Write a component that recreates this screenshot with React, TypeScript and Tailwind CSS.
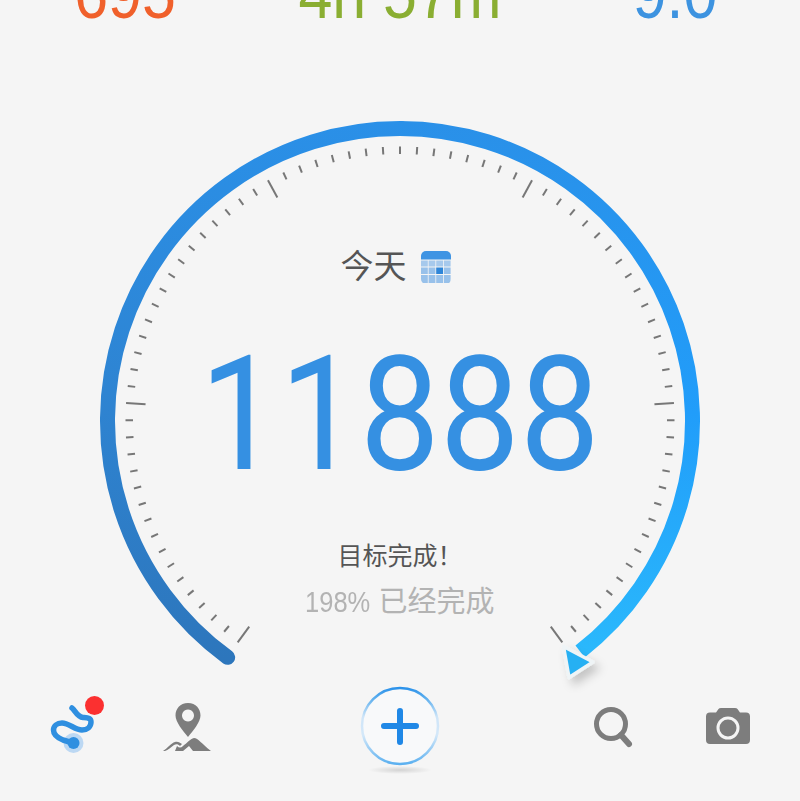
const CX = 400;
const CY = 421;
const R = 292.5;

const polar = (deg: number, r: number) => {
  const a = (deg * Math.PI) / 180;
  return { x: CX + r * Math.sin(a), y: CY - r * Math.cos(a) };
};

const ticks = Array.from({ length: 81 }, (_, i) => -143.75 + i * 3.59375);

function Gauge() {
  const start = polar(-143.9, R);
  const end = polar(142, R);
  return (
    <svg width="800" height="700" viewBox="0 0 800 700" className="absolute left-0 top-0">
      <defs>
        <linearGradient id="arcLeft" gradientUnits="userSpaceOnUse" x1="0" y1="660" x2="0" y2="121">
          <stop offset="0" stopColor="#2d76bc" />
          <stop offset="0.5" stopColor="#2e84d2" />
          <stop offset="1" stopColor="#2a90e8" />
        </linearGradient>
        <linearGradient id="arcRight" gradientUnits="userSpaceOnUse" x1="0" y1="121" x2="0" y2="650">
          <stop offset="0" stopColor="#2a90e8" />
          <stop offset="0.55" stopColor="#219dfa" />
          <stop offset="1" stopColor="#2ab8fc" />
        </linearGradient>
        <filter id="pointerShadow" x="-50%" y="-50%" width="200%" height="200%">
          <feDropShadow dx="5" dy="6" stdDeviation="5" floodColor="#000" floodOpacity="0.2" />
        </filter>
      </defs>
      {ticks.map((deg, i) => {
        const major = i % 16 === 0;
        const a = polar(deg, 274.5);
        const b = polar(deg, major ? 255 : 267);
        return <line key={i} x1={a.x} y1={a.y} x2={b.x} y2={b.y} stroke="#777" strokeWidth="2" />;
      })}
      <path
        d={`M ${start.x} ${start.y} A ${R} ${R} 0 0 1 ${CX + 1} ${CY - R}`}
        fill="none"
        stroke="url(#arcLeft)"
        strokeWidth="15"
        strokeLinecap="round"
      />
      <path
        d={`M ${CX} ${CY - R} A ${R} ${R} 0 0 1 ${end.x} ${end.y}`}
        fill="none"
        stroke="url(#arcRight)"
        strokeWidth="15"
      />
      <path
        d="M563.5 646.5 L593 662 L569 677.5 Z"
        fill="#28b0f3"
        stroke="#eff4f6"
        strokeWidth="3.5"
        strokeLinejoin="round"
        filter="url(#pointerShadow)"
      />
    </svg>
  );
}

function CalendarIcon() {
  const cells = Array.from({ length: 12 }, (_, i) => i);
  const rows = [9.5, 16.5, 24];
  const heights = [6, 6.5, 8];
  return (
    <svg width="30" height="33" viewBox="0 0 30 33">
      <defs>
        <clipPath id="calClip">
          <rect x="0" y="0" width="30" height="33" rx="5" />
        </clipPath>
      </defs>
      <g clipPath="url(#calClip)">
        <rect x="0" y="0" width="30" height="8.5" fill="#3f94e3" />
        {cells.map((i) => {
          const row = Math.floor(i / 4);
          return (
            <rect
              key={i}
              x={(i % 4) * 7.6}
              y={rows[row]}
              width="6.8"
              height={heights[row]}
              fill={i === 6 ? "#2f86d8" : row === 0 ? "#a6c9ec" : "#98c1ea"}
            />
          );
        })}
      </g>
    </svg>
  );
}

function RouteIcon() {
  return (
    <div className="relative w-[56px] h-[62px]">
      <svg width="56" height="62" viewBox="0 0 56 62">
        <circle cx="28.5" cy="49" r="10" fill="#bcd8f3" />
        <path
          d="M27 14 C30 16 32 23 38 23.5 C43 24 46 24 46 28 C46 33 42 36 37 36 C30 36 24 29 17 29 C12 29 8.5 32 8.5 36 C8.5 41 13 44 18 46 L28 49"
          fill="none"
          stroke="#2f8fe0"
          strokeWidth="5.5"
          strokeLinecap="round"
          strokeLinejoin="round"
        />
        <circle cx="28.5" cy="49" r="6" fill="#2f8fe0" />
      </svg>
      <span className="absolute left-[40px] top-[2px] w-[19px] h-[19px] rounded-full bg-[#fb3030]" />
    </div>
  );
}

function PinIcon() {
  return (
    <svg width="50" height="50" viewBox="0 0 50 50">
      <path
        d="M26 1 C34 1 38.5 7 38.5 13.5 C38.5 20 31 29 26 35 C21 29 13.5 20 13.5 13.5 C13.5 7 18 1 26 1 Z M26 7.5 a6 6 0 1 0 0.01 0 Z"
        fill="#7d7d7d"
        fillRule="evenodd"
      />
      <path
        d="M1 49 C6 46 9 41 13 40 C16 39 18 41 20 42 L18 44 C16 42 14 42 12 43 C9 45 6 48 3 49 Z M13 49 L15 44 C17 46 19 46 21 44 C25 41 28 37 32 36 C36 36 40 42 49 49 L31 49 L27 44 L21 49 Z"
        fill="#7d7d7d"
      />
    </svg>
  );
}

function SearchIcon() {
  return (
    <svg width="44" height="44" viewBox="0 0 44 44">
      <circle cx="18" cy="18" r="14.5" fill="none" stroke="#7d7d7d" strokeWidth="5" />
      <path d="M28 29 L36 38" stroke="#7d7d7d" strokeWidth="6" strokeLinecap="round" />
    </svg>
  );
}

function CameraIcon() {
  return (
    <svg width="44" height="36" viewBox="0 0 44 36">
      <path
        d="M4 4.5 H10 L12.5 1 Q13.2 0 15 0 H29 Q30.8 0 31.5 1 L34 4.5 H40 Q44 4.5 44 8.5 V32 Q44 36 40 36 H4 Q0 36 0 32 V8.5 Q0 4.5 4 4.5 Z"
        fill="#7d7d7d"
      />
      <circle cx="22" cy="20" r="10" fill="none" stroke="#f5f5f5" strokeWidth="3" />
    </svg>
  );
}

function AddButton() {
  return (
    <div className="relative w-[80px] h-[100px]">
      <svg width="80" height="100" viewBox="0 0 80 100">
        <defs>
          <linearGradient id="ring" x1="0" y1="0" x2="0" y2="1">
            <stop offset="0" stopColor="#2c92ea" />
            <stop offset="0.14" stopColor="#5fb0ee" />
            <stop offset="0.38" stopColor="#cfe5f8" />
            <stop offset="0.62" stopColor="#d4e8f9" />
            <stop offset="1" stopColor="#5bb0f0" />
          </linearGradient>
          <radialGradient id="floor">
            <stop offset="0" stopColor="#000" stopOpacity="0.14" />
            <stop offset="1" stopColor="#000" stopOpacity="0" />
          </radialGradient>
          <filter id="soft" x="-20%" y="-20%" width="140%" height="140%">
            <feGaussianBlur stdDeviation="0.7" />
          </filter>
        </defs>
        <ellipse cx="40" cy="84" rx="32" ry="4" fill="url(#floor)" />
        <circle cx="40" cy="40" r="38" fill="#f8f9fa" stroke="url(#ring)" strokeWidth="2.5" filter="url(#soft)" />
        <path d="M24 40 H56 M40 25 V56" stroke="#2088e6" strokeWidth="6" strokeLinecap="round" />
      </svg>
    </div>
  );
}

export default function App() {
  return (
    <div className="relative w-[800px] h-[801px] overflow-hidden bg-[#f5f5f5] font-['Liberation_Sans','Noto_Sans_CJK_SC',sans-serif]">
      <Gauge />

      <div className="flex h-[29px] items-end text-[70px] leading-none">
        <div className="w-[250px] text-center text-[#f0602b] scale-x-[0.87]">695</div>
        <div className="w-[300px] text-center text-[#8aae32] scale-x-[0.87]">4h 57m</div>
        <div className="w-[250px] text-center text-[#3d93e0] scale-x-[0.87]">9.0</div>
      </div>

      <div className="relative flex flex-col items-center pt-[216px]">
        <div className="flex items-center gap-[14px] pr-[9px] text-[33px] leading-[44px] text-[#555555]">
          <span>今天</span>
          <CalendarIcon />
        </div>
        <div className="mt-[42px] font-['Roboto'] text-[160px] leading-[168px] text-[#3590e2] scale-x-[0.89]">
          11888
        </div>
        <div className="mt-[40px] text-[25px] leading-[34px] text-[#555555]">目标完成！</div>
        <div className="mt-[11px] flex text-[29px] leading-[36px] text-[#b3b3b3]">
          <span className="origin-left scale-x-[0.88]">198%</span>
          <span className="-ml-[1px]">已经完成</span>
        </div>
      </div>

      <div className="absolute left-0 top-[686px] flex w-full items-start">
        <div className="ml-[45px] mt-[8px]">
          <RouteIcon />
        </div>
        <div className="ml-[61px] mt-[16px]">
          <PinIcon />
        </div>
        <div className="ml-[148px]">
          <AddButton />
        </div>
        <div className="ml-[153px] mt-[20px]">
          <SearchIcon />
        </div>
        <div className="ml-[69px] mt-[22px]">
          <CameraIcon />
        </div>
      </div>
    </div>
  );
}
